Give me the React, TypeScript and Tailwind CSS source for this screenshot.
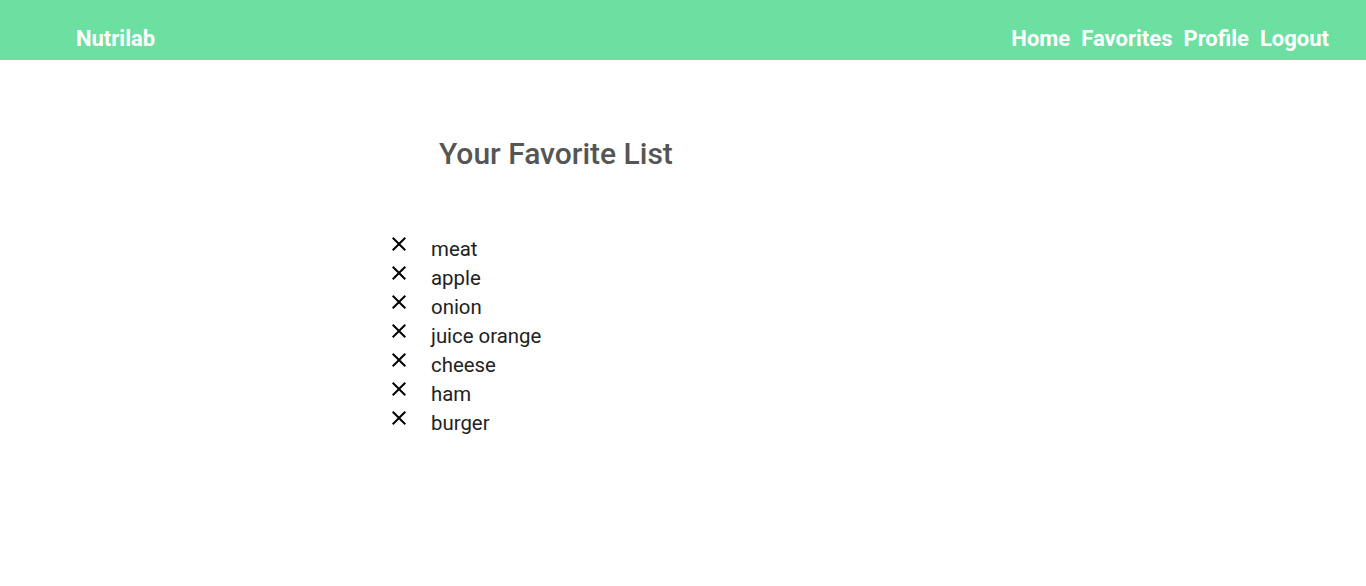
import React from "react";

const items = ["meat", "apple", "onion", "juice orange", "cheese", "ham", "burger"];

function CloseIcon() {
  return (
    <svg width="24" height="24" viewBox="0 0 24 24" className="shrink-0">
      <path
        d="M19 6.41 17.59 5 12 10.59 6.41 5 5 6.41 10.59 12 5 17.59 6.41 19 12 13.41 17.59 19 19 17.59 13.41 12z"
        fill="#000"
      />
    </svg>
  );
}

export default function App() {
  return (
    <div className="min-h-[586px] bg-white" style={{ fontFamily: "Roboto, 'Noto Sans', sans-serif" }}>
      <header className="h-[60px] bg-[#6be0a0] flex items-center justify-between pl-[76px] pr-[37px] pt-[17px]">
        <span className="text-white text-[22px] font-bold">Nutrilab</span>
        <nav className="flex gap-[11px] text-white text-[22px] font-bold">
          <a>Home</a>
          <a>Favorites</a>
          <a>Profile</a>
          <a>Logout</a>
        </nav>
      </header>
      <main className="pl-[387px]">
        <h1 className="pl-[52px] pt-[74px] text-[30px] font-medium text-[#555] leading-[40px]">Your Favorite List</h1>
        <ul className="mt-[61px] flex flex-col">
          {items.map((it) => (
            <li key={it} className="flex items-center h-[29px]">
              <span className="-mt-[12px]"><CloseIcon /></span>
              <span className="ml-[20px] text-[20.4px] text-[#222] leading-[29px]">{it}</span>
            </li>
          ))}
        </ul>
      </main>
    </div>
  );
}
